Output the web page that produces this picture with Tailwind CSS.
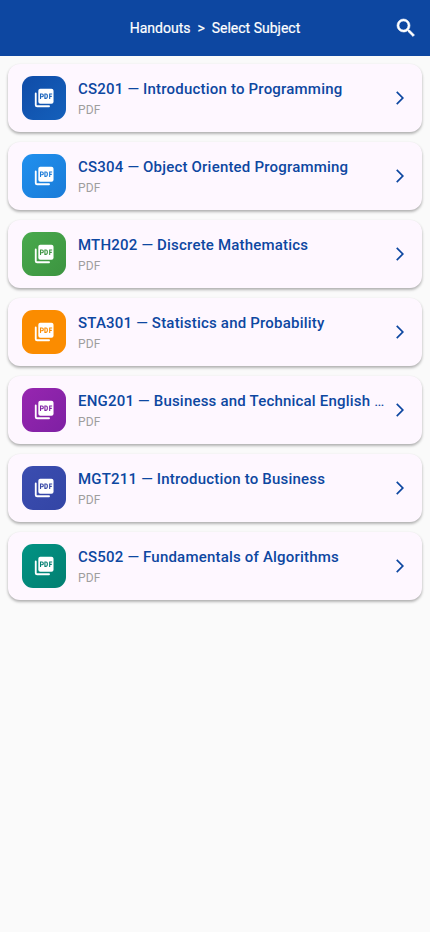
<!DOCTYPE html>
<html lang="en"><head><meta charset="utf-8"><title>Handouts</title>
<script src="https://cdn.jsdelivr.net/npm/@tailwindcss/browser@4"></script></head>
<body class="bg-[#fafafa] font-['Roboto',sans-serif] min-h-screen">
<header class="h-14 bg-[#0d47a1] flex items-center text-white pl-12">
<h1 class="flex-1 text-center text-[14px] [-webkit-text-stroke:0.2px_white] whitespace-pre">Handouts  &gt;  Select Subject</h1>
<div class="w-12 grid place-items-center"><svg class="size-6" viewBox="0 0 24 24" fill="currentColor" stroke="currentColor" stroke-width=".6"><path d="M15.5 14h-.79l-.28-.27A6.47 6.47 0 0 0 16 9.5 6.5 6.5 0 1 0 9.5 16c1.61 0 3.09-.59 4.23-1.57l.27.28v.79l5 4.99L20.49 19l-4.99-5zm-6 0C7.01 14 5 11.99 5 9.5S7.01 5 9.5 5 14 7.01 14 9.5 11.99 14 9.5 14z"/></svg></div>
</header>
<main id="list" class="p-2 flex flex-col gap-[10px]"></main>
<script>
const rows=[["CS201 — Introduction to Programming","#104ca8","#1460bb"],["CS304 — Object Oriented Programming","#2090ee","#1a7bd8"],["MTH202 — Discrete Mathematics","#49a94d","#3c9440"],["STA301 — Statistics and Probability","#fb8c00","#fb8c00"],["ENG201 — Business and Technical English","#9726b0","#7e20a3"],["MGT211 — Introduction to Business","#3b4db0","#3345a5"],["CS502 — Fundamentals of Algorithms","#029384","#027f71"]];
document.getElementById('list').innerHTML=rows.map(([t,a,b],i)=>`<article class="h-[68px] rounded-xl bg-[#fef7ff] flex items-center pl-[14px] pr-[14px] shadow-[0_2px_3px_rgba(0,0,0,0.24),0_1px_3px_rgba(0,0,0,0.1)]">
<div class="size-11 shrink-0 rounded-[11px] grid place-items-center text-white" style="background:linear-gradient(135deg,${a},${b})"><svg class="size-[22px]" viewBox="0 0 24 24" fill="currentColor"><rect x="5.800" y="1.800" width="16.600" height="16.400" rx="2.200"/><path d="M3 7v12.500c0 .9.600 1.500 1.500 1.500h13" fill="none" stroke="currentColor" stroke-width="2" stroke-linecap="round"/><path d="M8.200 13V7.700H9.800a1.250 1.250 0 0 1 0 2.900H8.200M13 7.700v4.700h1.200q1.400 0 1.400-1.400V9.100q0-1.400-1.400-1.400zM18.200 13V7.700H20.900M18.200 10.200H20.500" fill="none" stroke="${b}" stroke-width="1.200"/></svg></div>
<div class="flex-1 min-w-0 ml-3"><h2 class="text-[15px] leading-[21px] font-medium text-[#0d47a1] tracking-[0.2px] whitespace-nowrap">${t}${i===4?' <span class="font-normal">…</span>':''}</h2><p class="text-[12px] leading-4 mt-[2px] tracking-[0.2px] text-[#9e9e9e]">PDF</p></div>
<svg class="size-4 shrink-0 text-[#0d47a1]" viewBox="0 0 24 24" fill="currentColor"><path d="M6.230 20.230 8 22l10-10L8 2 6.230 3.770 14.460 12z"/></svg></article>`).join('');
</script></body></html>
